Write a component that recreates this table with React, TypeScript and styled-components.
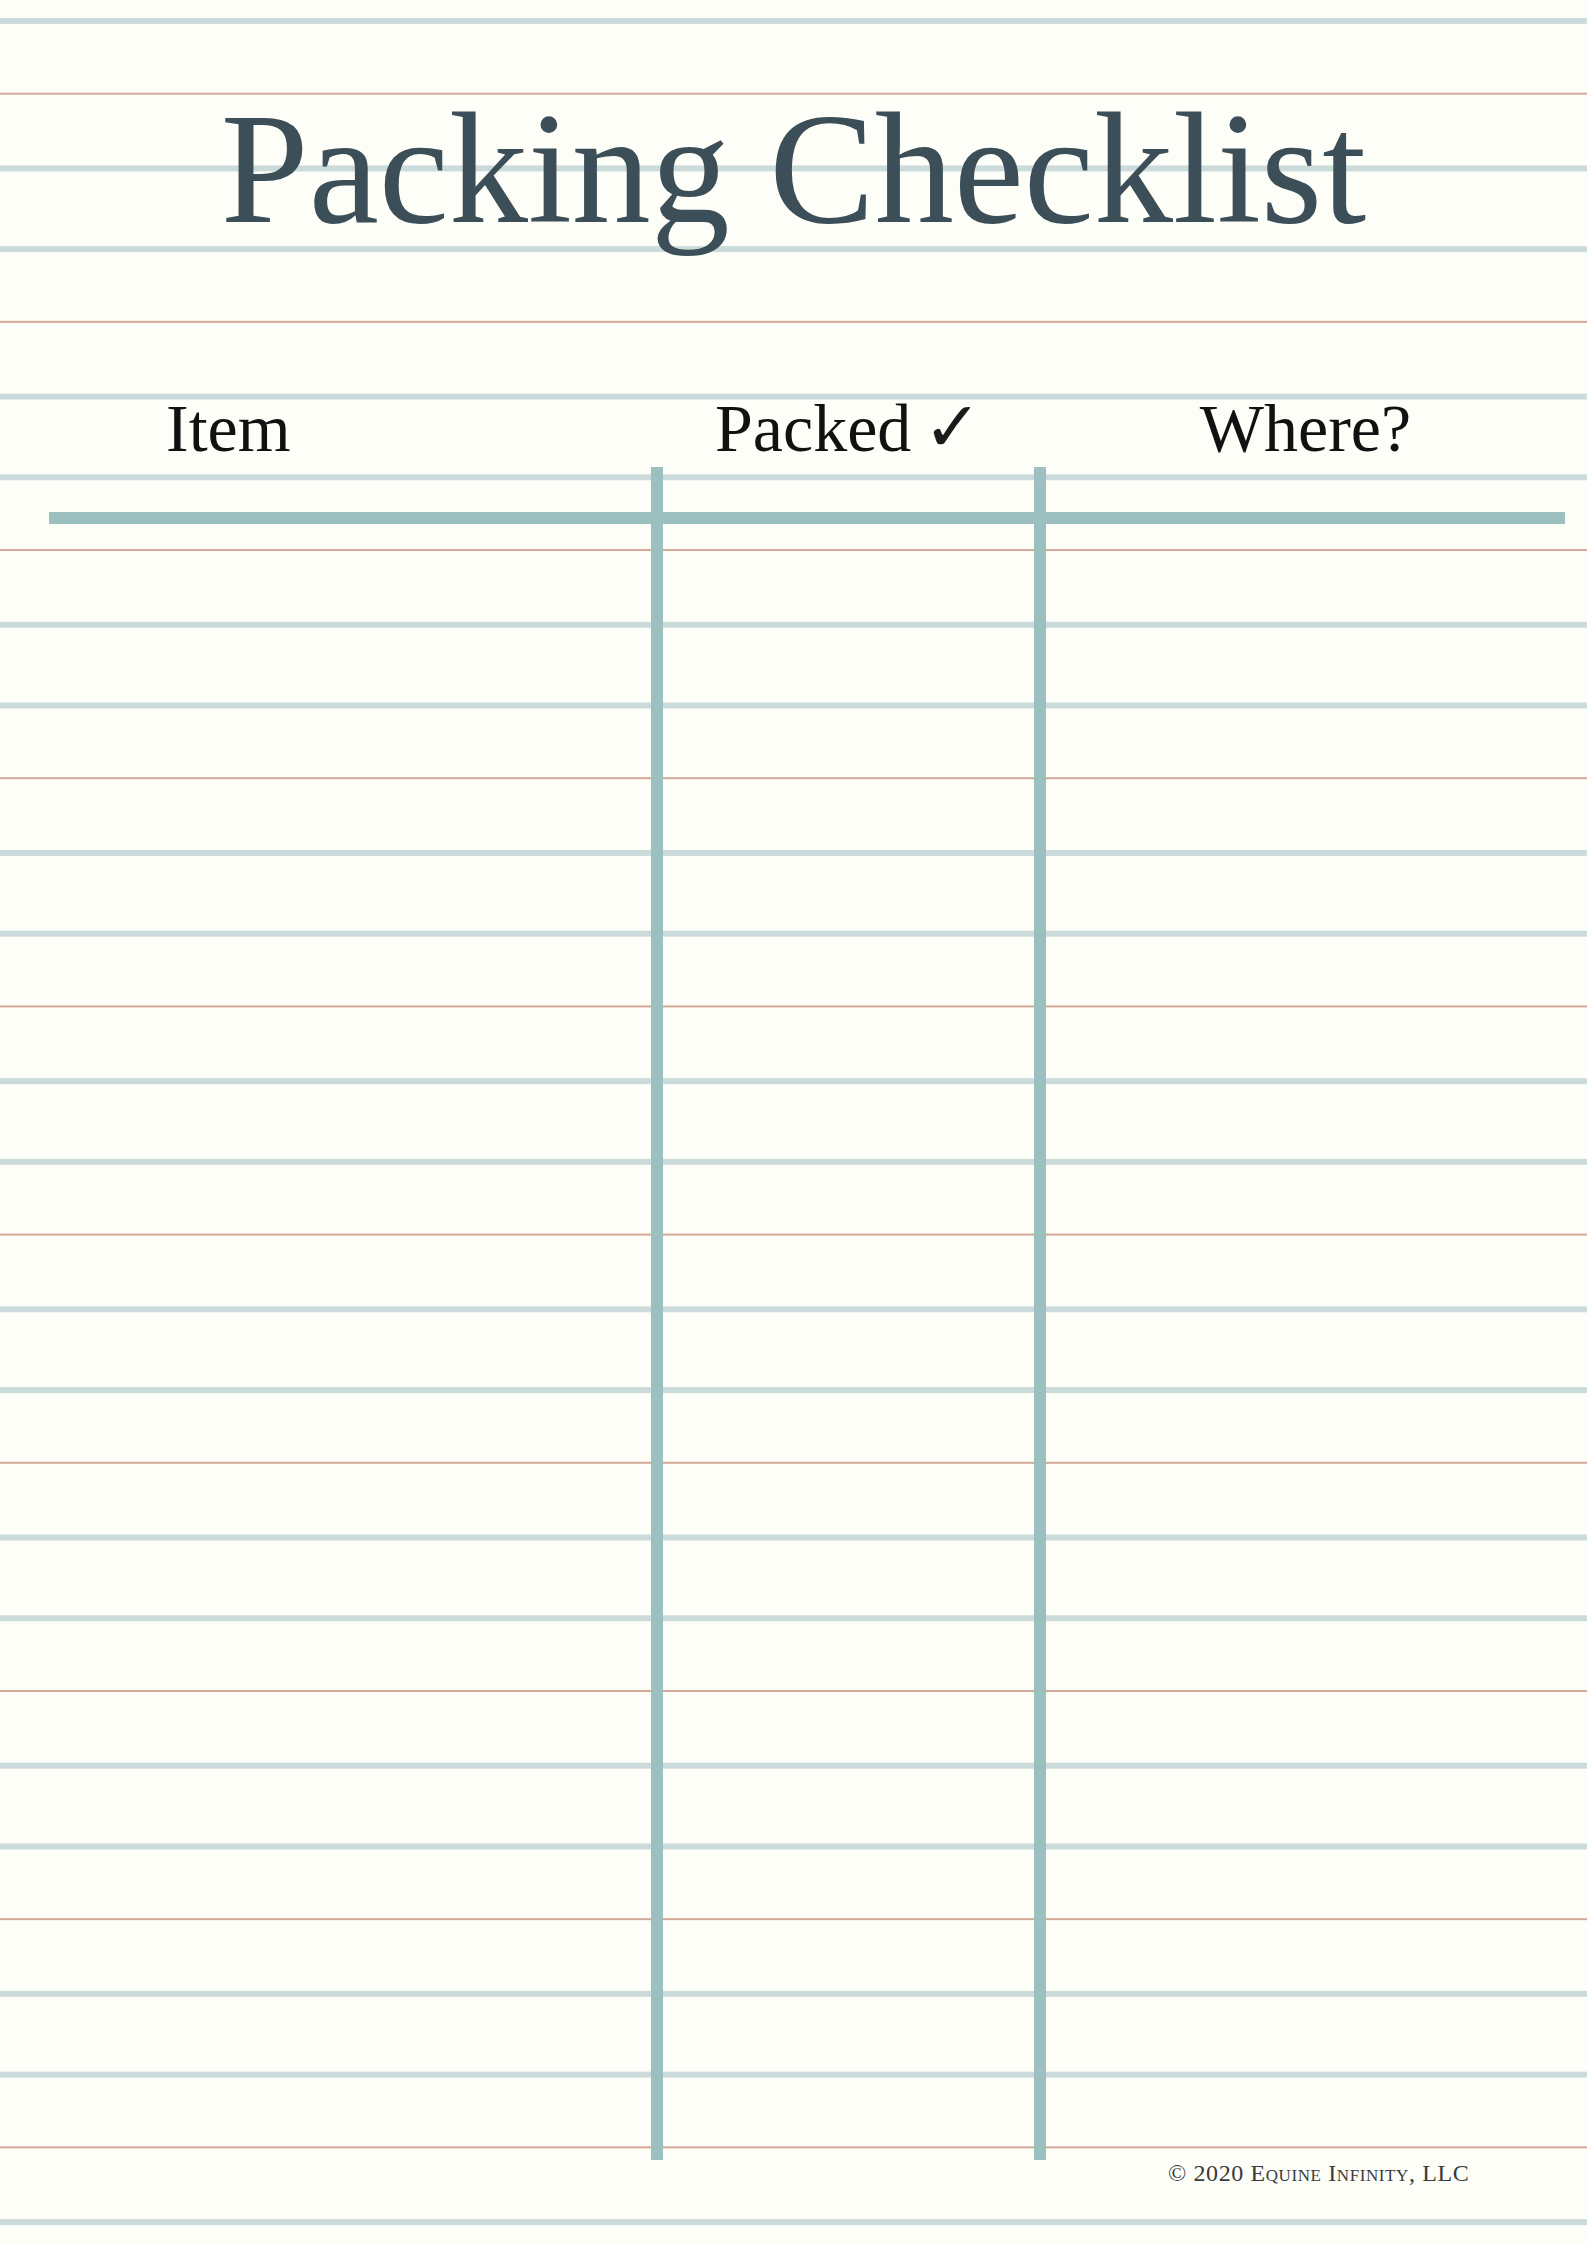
import styled, { createGlobalStyle } from "styled-components";

const GlobalStyle = createGlobalStyle`
  html, body {
    margin: 0;
    padding: 0;
    background: #fefef8;
  }
`;

const COLUMNS = "602px 12px 371px 12px 519px";
const INK = "#9cbfbf";

const Sheet = styled.main`
  width: 1587px;
  min-height: 2245px;
  box-sizing: border-box;
  display: flex;
  flex-direction: column;
  background-color: #fefef8;
  background-image: linear-gradient(
    to bottom,
    transparent 18px,
    #cbdbdb 18px,
    #cbdbdb 24px,
    transparent 24px,
    transparent 93px,
    #d2a898 93px,
    #d2a898 95px,
    transparent 95px,
    transparent 165px,
    #cbdbdb 165px,
    #cbdbdb 171px,
    transparent 171px
  );
  background-size: 100% 228.2px;
  background-repeat: repeat-y;
`;

const Title = styled.h1`
  margin: 90px 0 0;
  font-family: "Liberation Serif", "Times New Roman", serif;
  font-weight: 400;
  font-size: 158px;
  line-height: 158px;
  color: #3c4f59;
  text-align: center;
`;

const Grid = styled.div`
  display: grid;
  grid-template-columns: ${COLUMNS};
  margin-left: 49px;
  width: 1516px;
`;

const HeaderRow = styled(Grid)`
  margin-top: 146px;
  height: 68px;
`;

const Label = styled.div<{ $col: number; $align: "left" | "center"; $indent?: number }>`
  grid-column: ${({ $col }) => $col};
  text-align: ${({ $align }) => $align};
  padding-left: ${({ $indent = 0 }) => $indent}px;
  font-family: "Liberation Serif", "Times New Roman", serif;
  font-size: 68px;
  line-height: 68px;
  color: #111;
  white-space: nowrap;
`;

const Check = styled.span`
  font-family: "DejaVu Sans", sans-serif;
  font-size: 70px;
  line-height: 0;
  margin-left: 12px;
  color: #1a1a1a;
`;

const Body = styled(Grid)`
  margin-top: 5px;
  height: 1693px;
  grid-template-rows: 45px 12px 1fr;
`;

const Divider = styled.div<{ $col: number }>`
  grid-column: ${({ $col }) => $col};
  grid-row: 1 / -1;
  background: ${INK};
`;

const HeadRule = styled.div`
  grid-column: 1 / -1;
  grid-row: 2;
  background: ${INK};
`;

const Footer = styled.footer`
  margin-top: 1px;
  padding-left: 1168px;
  font-family: "Liberation Serif", "Times New Roman", serif;
  font-variant: small-caps;
  font-size: 24px;
  line-height: 24px;
  letter-spacing: 0.6px;
  color: #3a3a3a;
`;

export default function App() {
  return (
    <>
      <GlobalStyle />
      <Sheet>
        <Title>Packing Checklist</Title>

        <HeaderRow>
          <Label $col={1} $align="left" $indent={117}>
            Item
          </Label>
          <Label $col={3} $align="center">
            Packed<Check>✓</Check>
          </Label>
          <Label $col={5} $align="center">
            Where?
          </Label>
        </HeaderRow>

        <Body>
          <HeadRule />
          <Divider $col={2} />
          <Divider $col={4} />
        </Body>

        <Footer>© 2020 Equine Infinity, LLC</Footer>
      </Sheet>
    </>
  );
}
